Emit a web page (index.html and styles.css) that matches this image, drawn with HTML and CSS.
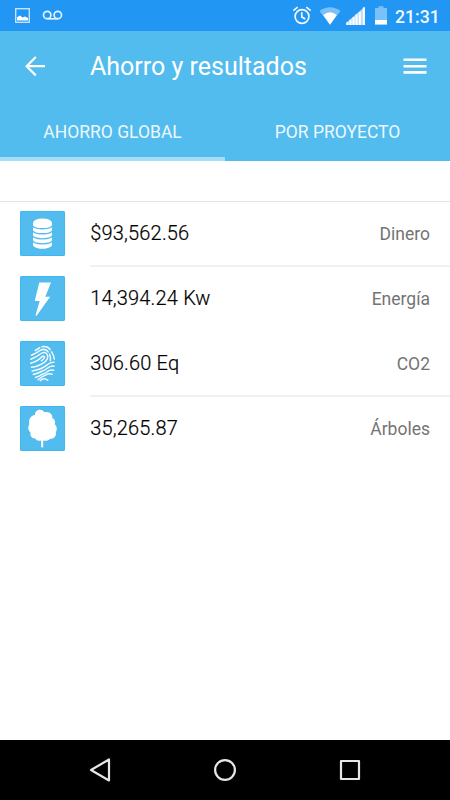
FILE: index.html
```html
<!DOCTYPE html>
<html lang="es">
<head>
<meta charset="utf-8">
<title>Ahorro y resultados</title>
<link rel="stylesheet" href="styles.css">
</head>
<body>
<div class="screen">
  <div class="status">
    <svg class="status-left" width="70" height="31" viewBox="0 0 70 31" fill="none">
      <rect x="15.7" y="8.7" width="13.6" height="13.6" stroke="#c4e2fc" stroke-width="1.4"/>
      <path d="M17 20.5V17.3L20 15.5L22.5 17.5L25 16.5L28 18V20.5Z" fill="#fff"/>
      <g stroke="#e3f1fe" stroke-width="1.7"><circle cx="47.2" cy="15" r="3.7"/><circle cx="57.8" cy="15" r="3.7"/><path d="M47.2 18.8H57.8"/></g>
    </svg>
    <svg class="status-right" width="110" height="31" viewBox="280 0 110 31" fill="none">
      <g stroke="#f2f9ff" stroke-width="1.7"><circle cx="302" cy="16.5" r="6.9"/><path d="M293.3 10.6L297.7 7.1M310.7 10.6L306.3 7.1M301.8 12.3V17L305.3 19.1" /></g>
      <path d="M319.5 11Q330 3.5 340.5 11L330 24.7Z" fill="#7ac0f9"/>
      <path d="M323.2 15Q330 9.5 336.8 15L330 24.7Z" fill="#fff"/>
      <path d="M346 25V23L365 6.5V25Z" fill="#b8dcfb"/>
      <path d="M347.5 25V22.3M350.5 25V19.8M353.5 25V17.2M356.5 25V14.6M359.8 25V12M363.8 25V7.5" stroke="#fff" stroke-width="2"/>
      <path d="M375 8H378.5V6.3H383.5V8H387V24.5H375Z" fill="#7ac0f9"/>
      <path d="M375 20H387V24.5H375Z" fill="#fff"/>
    </svg>
    <span class="clock">21:31</span>
  </div>
  <header class="header">
    <div class="toolbar">
      <svg class="back" width="20" height="20" viewBox="0 0 20 20" fill="none" stroke="#fff" stroke-width="2.2"><path d="M20 10.2H1.8M10.8 1L1.6 10.2L10.8 19.4"/></svg>
      <h1 class="title">Ahorro y resultados</h1>
      <svg class="menu" width="24" height="18" viewBox="0 0 24 18" fill="#fff"><path d="M.5 1.5H23.5V4H.5ZM.5 7.9H23.5V10.4H.5ZM.5 14.1H23.5V16.7H.5Z"/></svg>
    </div>
    <nav class="tabs">
      <div class="tab active"><span>AHORRO GLOBAL</span></div>
      <div class="tab"><span>POR PROYECTO</span></div>
    </nav>
  </header>
  <main class="list">
    <div class="row">
      <svg class="tile" width="45" height="45" viewBox="0 0 45 45">
        <path d="M13 12V33.5C13 36 17 37.8 22.3 37.8S32 36 32 33.5V12Z" fill="#fff"/>
        <ellipse cx="22.5" cy="12" rx="9.5" ry="4.6" fill="#fff"/>
        <g fill="none" stroke="#53bcee" stroke-width="1.4"><path d="M12 13.5C13 19.2 32 19.2 33 13.5M12 18.6C13 24.2 32 24.2 33 18.6M12 23.7C13 29.2 32 29.2 33 23.7M12 28.7C13 34.2 32 34.2 33 28.7"/></g>
      </svg>
      <div class="content"><span class="value">$93,562.56</span><span class="label">Dinero</span></div>
    </div>
    <div class="row">
      <svg class="tile" width="45" height="45" viewBox="0 0 45 45"><path d="M19.3 6.5H31L25.3 20.7H30.2L16.4 40L15.5 39.3L19.7 25H14.7Z" fill="#fff"/></svg>
      <div class="content plain"><span class="value">14,394.24 Kw</span><span class="label">Energía</span></div>
    </div>
    <div class="row">
      <svg class="tile" width="45" height="45" viewBox="0 0 45 45" fill="none" stroke="#f2fbff" stroke-width="1.5" stroke-linecap="round" stroke-linejoin="round">
        <path d="M22 5.7Q27.5 4.8 30.2 8.6M31.6 10.8Q34 14.3 34.3 18.2M15.3 9.5L19.8 6.6M11.5 14.2Q17.5 11.7 20.3 9.3Q25.3 6.8 28.2 11M29.5 13.2Q31.2 16.3 30.3 19.5M10.8 18.3Q17 15.8 20.3 13Q25.2 9.5 27.5 14Q28.7 18 24.3 21.3Q19 25.2 11.5 26.3M10.8 22.3Q17.5 20.3 20.8 16.8Q23.2 14.4 24.3 15.5Q25.2 17 21.5 19.7M34 21.2Q30.5 20.8 27.2 23.8Q21.5 28.3 12.2 30M34 25.2Q30.5 24.5 27 27.5Q24.5 29.7 22.5 30Q18 32.3 13.3 33.4M33.6 29.2Q30 28.2 26.8 31Q24 33 22 33.3Q19 35.2 15.5 36.5M32 33.2Q28.7 32 26 34Q22.5 34.8 18 38.7M20.3 39.8Q22 37.8 24 37.8Q26 37.8 27.8 39.3"/>
      </svg>
      <div class="content"><span class="value">306.60 Eq</span><span class="label">CO2</span></div>
    </div>
    <div class="row">
      <svg class="tile" width="45" height="45" viewBox="0 0 45 45" fill="#fff">
        <path d="M15 9C15 2.5 23 2.8 24.3 6.2C29 4.8 33 8.3 32.3 12C35.3 13.5 35.6 16.5 34.8 18.2C37.5 21 37 24.5 35.8 26.2C36.7 30.5 33.5 33 30.2 32.7C28.5 35 25.5 35 23.3 34.5H21C18.5 35.3 16 34.3 15.3 32.5C11.5 32.7 9.8 29.5 10.6 26.8C8 24.5 7.5 21 9.3 18.3C8.3 14 10.5 9.5 15 9Z"/>
        <rect x="21.2" y="33" width="2" height="8.3"/>
      </svg>
      <div class="content plain"><span class="value">35,265.87</span><span class="label">Árboles</span></div>
    </div>
  </main>
  <footer class="navbar">
    <svg width="24" height="26" viewBox="0 0 24 26"><path d="M21 2.5V23.5L3 13Z"/></svg>
    <svg width="24" height="26" viewBox="0 0 24 26"><circle cx="12" cy="13" r="9.9"/></svg>
    <svg width="24" height="26" viewBox="0 0 24 26"><rect x="3" y="4" width="18" height="18"/></svg>
  </footer>
</div>
</body>
</html>
```
FILE: styles.css
```css
body {
  margin: 0;
  font-family: Roboto, sans-serif;
  background: #fff;
}
svg { display: block; flex: none; }
.screen {
  display: flex;
  flex-direction: column;
  width: 450px;
  height: 800px;
}
.status {
  display: flex;
  align-items: center;
  height: 31px;
  background: #2196f3;
}
.status-right { margin-left: auto; }
.clock {
  width: 60px;
  box-sizing: border-box;
  padding: 2px 0 0 5px;
  font-size: 17.7px;
  font-weight: 500;
  color: #f2f9ff;
}
.header {
  height: 130px;
  background: #53bcee;
  color: #fff;
}
.toolbar {
  display: flex;
  align-items: center;
  height: 70px;
  padding: 0 23px 0 25px;
}
.title {
  flex: 1;
  margin: 0 0 0 45px;
  padding-top: 2px;
  font-size: 25px;
  font-weight: 400;
  line-height: 30px;
}
.tabs {
  display: flex;
  height: 60px;
}
.tab {
  flex: 1;
  display: flex;
  align-items: center;
  justify-content: center;
  box-sizing: border-box;
  border-bottom: 4px solid transparent;
  padding-top: 6px;
  font-size: 17.5px;
  color: #ecf8fd;
}
.active { border-color: #a5dcf7; }
.list {
  flex: 1;
  margin-top: 40px;
  border-top: 1px solid #e4e4e4;
}
.row {
  display: flex;
  align-items: flex-start;
  height: 65px;
  padding-left: 20px;
}
.tile {
  box-sizing: border-box;
  margin: 9px 25px 0 0;
  border-radius: 2px;
  background: #53bcee;
  box-shadow: inset 0 0 0 1px #3db8f0;
}
.content {
  flex: 1;
  display: flex;
  align-items: center;
  justify-content: space-between;
  box-sizing: border-box;
  height: 65px;
  padding-right: 20px;
  border-bottom: 2px solid #f1f1f1;
}
.plain { border-color: transparent; }
.value {
  padding: 0 0 1px 0.3px;
  font-size: 20px;
  font-weight: 300;
  letter-spacing: 0.17px;
  color: #000;
  -webkit-text-stroke: 0.2px #000;
}
.label {
  padding-top: 1px;
  font-size: 17.5px;
  color: #747474;
}
.navbar {
  display: flex;
  align-items: center;
  justify-content: center;
  gap: 101px;
  height: 60px;
  background: #000;
}
.navbar svg {
  fill: none;
  stroke: #e6e6e6;
  stroke-width: 2.2;
  stroke-linejoin: round;
}
```
